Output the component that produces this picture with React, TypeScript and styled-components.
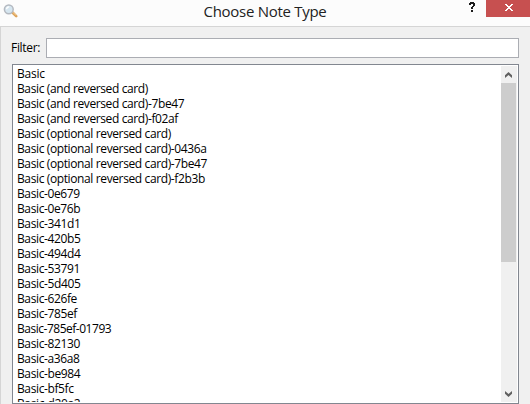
import React from 'react';
import styled, { createGlobalStyle } from 'styled-components';

const GlobalStyle = createGlobalStyle`
  * { box-sizing: border-box; }
  body { margin: 0; overflow: hidden; background: #f0f0f0; }
`;

const Dialog = styled.div`
  width: 530px;
  height: 404px;
  display: flex;
  flex-direction: column;
  background: #f0f0f0;
  color: #000;
  font-family: 'Open Sans', 'Noto Sans', sans-serif;
  font-size: 12px;
`;

const TitleBar = styled.header`
  height: 26px;
  flex: none;
  display: grid;
  grid-template-columns: 72px 1fr 28px 44px;
  background: #fcfcfc;
`;

const AppIcon = styled.svg`
  width: 16px;
  height: 16px;
  margin: 3px 0 0 3px;
`;

const Title = styled.h1`
  margin: 0;
  text-align: center;
  font-size: 15px;
  font-weight: 400;
  line-height: 23px;
  letter-spacing: -0.29px;
  color: #222;
`;

const HelpButton = styled.button`
  border: 0;
  padding: 0;
  height: 17px;
  background: transparent;
  display: flex;
  svg { margin: 2px 0 0 11px; }
`;

const CloseButton = styled.button`
  border: 0;
  padding: 0;
  height: 17px;
  background: #c75050;
  display: flex;
  svg { margin: 4px 0 0 19px; }
`;

const Body = styled.main`
  flex: 1;
  min-height: 0;
  display: flex;
  flex-direction: column;
  border-top: 1px solid #d5d5d5;
  border-left: 1px solid #d5d5d5;
  padding: 11px 11px 0;
`;

const FilterRow = styled.label`
  height: 20px;
  flex: none;
  display: flex;
  align-items: center;
  margin-left: -1px;
`;

const FilterLabel = styled.span`
  width: 35px;
  line-height: 20px;
  letter-spacing: -0.3px;
`;

const FilterInput = styled.input`
  flex: 1;
  min-width: 0;
  height: 20px;
  border: 1px solid #abadb3;
  border-radius: 0;
  background: #fff;
  padding: 0 4px;
  outline: 0;
`;

const ListBox = styled.section`
  flex: 1;
  min-height: 0;
  margin-top: 6px;
  display: flex;
  border: 1px solid #828790;
  background: #fff;
  padding: 1px 1px 1px 4px;
`;

const Items = styled.ul`
  flex: 1;
  margin: 0;
  padding: 0;
  overflow: hidden;
  list-style: none;
`;

const Item = styled.li<{ $tracking: number }>`
  height: 15px;
  line-height: 15px;
  white-space: nowrap;
  letter-spacing: ${(p) => p.$tracking}px;
`;

const ScrollBar = styled.div`
  width: 16px;
  background: #f0f0f0;
  display: flex;
  flex-direction: column;
`;

const ScrollButton = styled.div`
  height: 17px;
  flex: none;
  display: flex;
  padding-left: 4px;
  align-items: center;
`;

const Track = styled.div`
  flex: 1;
`;

const Thumb = styled.div`
  width: 15px;
  height: 179px;
  background: #cdcdcd;
`;

const names = [
  'Basic',
  'Basic (and reversed card)',
  'Basic (and reversed card)-7be47',
  'Basic (and reversed card)-f02af',
  'Basic (optional reversed card)',
  'Basic (optional reversed card)-0436a',
  'Basic (optional reversed card)-7be47',
  'Basic (optional reversed card)-f2b3b',
  'Basic-0e679',
  'Basic-0e76b',
  'Basic-341d1',
  'Basic-420b5',
  'Basic-494d4',
  'Basic-53791',
  'Basic-5d405',
  'Basic-626fe',
  'Basic-785ef',
  'Basic-785ef-01793',
  'Basic-82130',
  'Basic-a36a8',
  'Basic-be984',
  'Basic-bf5fc',
  'Basic-d20a2',
];

const trackingFor = (name: string) => {
  if (name === 'Basic') return -0.25;
  return name.length === 17 ? -0.48 : -0.38;
};

export default function App() {
  return (
    <Dialog>
      <GlobalStyle />
      <TitleBar>
        <AppIcon viewBox="0 0 16 16">
          <path d="M9.5 9.5l3.7 3.6" stroke="#dca259" strokeWidth="2.7" strokeLinecap="round" />
          <path d="M9.7 9.2l3.5 3.2" stroke="#f5d096" strokeWidth="0.9" />
          <circle cx="5.8" cy="6.3" r="4.4" fill="#d6e6f0" stroke="#b4b9c0" strokeWidth="1.5" />
          <path d="M3.6 6.2a2.5 2.5 0 0 1 2.6-2.3" stroke="#fff" strokeWidth="1.3" fill="none" />
        </AppIcon>
        <Title>Choose Note Type</Title>
        <HelpButton aria-label="Help">
          <svg width="6" height="10" viewBox="0 0 6 10" shapeRendering="crispEdges">
            <path d="M1 0h4v1h1v3H5v1H4v2H2V5h1V4h1V2H2v1H0V1h1zM2 8h2v2H2z" fill="#1c1c1c" />
          </svg>
        </HelpButton>
        <CloseButton aria-label="Close">
          <svg width="8" height="7" viewBox="0 0 8 7" shapeRendering="crispEdges">
            <path d="M0 0h2v1h1v1h2V1h1V0h2v1H7v1H6v1H5v1h1v1h1v1h1v1H6V6H5V5H3v1H2v1H0V6h1V5h1V4h1V3H2V2H1V1H0z" fill="#fff" />
          </svg>
        </CloseButton>
      </TitleBar>
      <Body>
        <FilterRow>
          <FilterLabel>Filter:</FilterLabel>
          <FilterInput aria-label="Filter" />
        </FilterRow>
        <ListBox>
          <Items>
            {names.map((name) => (
              <Item key={name} $tracking={trackingFor(name)}>
                {name}
              </Item>
            ))}
          </Items>
          <ScrollBar>
            <ScrollButton>
              <svg width="7" height="6" viewBox="0 0 7 6">
                <path d="M0 6V3.3L3.5 0 7 3.3V6L3.5 3.1z" fill="#606060" />
              </svg>
            </ScrollButton>
            <Track>
              <Thumb />
            </Track>
            <ScrollButton>
              <svg width="7" height="6" viewBox="0 0 7 6">
                <path d="M0 0v2.7L3.5 6 7 2.7V0L3.5 2.9z" fill="#606060" />
              </svg>
            </ScrollButton>
          </ScrollBar>
        </ListBox>
      </Body>
    </Dialog>
  );
}
